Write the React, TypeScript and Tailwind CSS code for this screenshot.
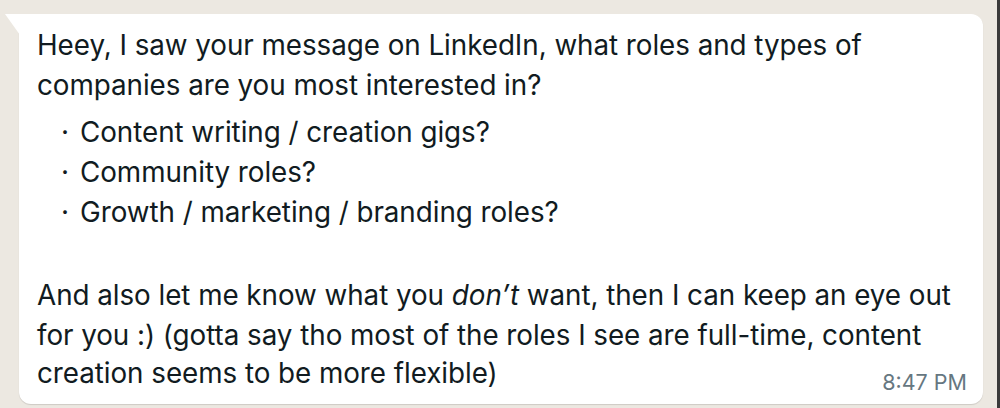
import React from "react";

const items = [
  "Content writing / creation gigs?",
  "Community roles?",
  "Growth / marketing / branding roles?",
];

export default function App() {
  return (
    <div className="w-[1000px] h-[408px] bg-[#ece8e1] pt-[14px] pl-[19px] relative overflow-hidden">
      <div className="absolute right-0 top-0 h-full w-[3px] bg-[#3a3a3a]" />
      <div
        className="relative w-[964px] h-[390px] bg-white rounded-[12px] rounded-tl-none shadow-[0_1px_1px_rgba(0,0,0,0.13)] text-[#111b21] pl-[18px] pt-[11px]"
        style={{ fontFamily: "Inter, 'Noto Sans', sans-serif" }}
      >
        {/* tail */}
        <svg className="absolute -left-[14px] top-0" width="15" height="22" viewBox="0 0 15 22">
          <path d="M15 0 L0 0 L15 21 Z" fill="#ffffff" />
        </svg>
        <div className="text-[27.8px] leading-[40px] tracking-[-0.05px]">
          <p>
            Heey, I saw your message on LinkedIn, what roles and types of
            <br />
            companies are you most interested in?
          </p>
          <ul className="mt-[7px] pl-[24px]">
            {items.map((t) => (
              <li key={t} className="flex">
                <span className="w-[19px]">·</span>
                <span>{t}</span>
              </li>
            ))}
          </ul>
          <p className="mt-[43px]">
            And also let me know what you <em>don’t</em> want, then I can keep an eye out
            <br />
            for you :) (gotta say tho most of the roles I see are full-time, content
            <br />
            <span className="relative -top-[2px]">creation seems to be more flexible)</span>
          </p>
        </div>
        <span className="absolute right-[16px] bottom-[8px] text-[21.5px] leading-[28px] text-[#667781]">
          8:47 PM
        </span>
      </div>
    </div>
  );
}
